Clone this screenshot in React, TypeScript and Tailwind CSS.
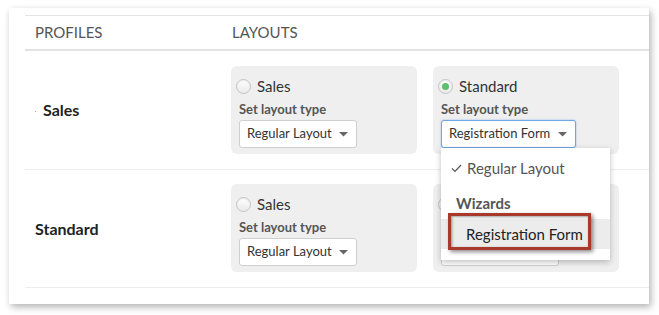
import React from 'react';

const Caret = () => (
  <svg width="9" height="5" viewBox="0 0 9 5" className="ml-auto shrink-0">
    <path d="M0 0 L9 0 L4.5 4.5 Z" fill="#666" />
  </svg>
);

const Radio = ({ checked }: { checked?: boolean }) => (
  <span className="w-[15px] h-[15px] rounded-full border border-[#c4c4c4] bg-gradient-to-b from-white to-[#e9e9e9] flex items-center justify-center shadow-[inset_0_1px_1px_rgba(0,0,0,0.08)]">
    {checked && <span className="w-[7px] h-[7px] rounded-full bg-[#5cbf6a]" />}
  </span>
);

interface PanelProps {
  name: string;
  checked?: boolean;
  value: string;
  width: string;
  focused?: boolean;
  menu?: boolean;
}

const Panel: React.FC<PanelProps> = ({ name, checked, value, width, focused, menu }) => (
  <div className="w-[186px] h-[88px] rounded-md bg-[#efefef] pl-[5px] pt-[11px]">
    <div className="flex items-center gap-[6px] text-[15px] text-[#333] leading-[18px]">
      <Radio checked={checked} />
      <span>{name}</span>
    </div>
    <div className="pl-[3px] mt-[6px] text-[13px] font-bold text-[#555] leading-[16px]">Set layout type</div>
    <div className="relative ml-[3px] mt-[3px]">
      <div
        className={`${width} h-[28px] flex items-center pl-[7px] pr-[8px] text-[13px] text-[#333] bg-white rounded-[3px] border whitespace-nowrap ${
          focused ? 'border-[#6ea6e8] shadow-[0_0_2px_rgba(80,140,230,0.6)]' : 'border-[#cfcfcf]'
        }`}
      >
        <span>{value}</span>
        <Caret />
      </div>
      {menu && (
        <div className="absolute left-0 top-[28px] z-10 w-[169px] h-[112px] bg-white shadow-[0_2px_6px_rgba(0,0,0,0.25)] whitespace-nowrap">
          <div className="flex items-center h-[40px] pl-[10px] text-[15px] text-[#555]">
            <svg width="11" height="9" viewBox="0 0 11 9" className="mr-[5px]">
              <path d="M1 4.5 L4 7.5 L10 1" fill="none" stroke="#555" strokeWidth="1.2" />
            </svg>
            Regular Layout
          </div>
          <div className="flex items-center h-[31px] pl-[15px] text-[15px] font-bold text-[#555]">Wizards</div>
          <div className="flex items-center h-[30px] pl-[25px] bg-[#ececec] text-[15px] text-[#222]">Registration Form</div>
          <div className="absolute left-[7px] top-[65px] w-[143px] h-[37px] border-[3px] border-[#a8392b] shadow-[2px_2px_4px_rgba(0,0,0,0.45),inset_1px_1px_3px_rgba(0,0,0,0.4)]" />
        </div>
      )}
    </div>
  </div>
);

export default function App() {
  return (
    <div className="min-h-screen bg-white font-['Lato',sans-serif] pt-2 pl-[9px]">
      <div className="w-[640px] h-[296px] bg-white shadow-[2px_3px_7px_rgba(0,0,0,0.3)] pt-[7px] pl-4">
        <div className="border-t border-[#e4e4e4]">
          {/* Header */}
          <div className="flex items-center h-[35px] border-b-2 border-[#e2e2e2] text-[15px] text-[#555]">
            <div className="w-[207px] pl-[10px]">PROFILES</div>
            <div>LAYOUTS</div>
          </div>

          {/* Row: Sales */}
          <div className="flex h-[119px] border-b border-[#ededed]">
            <div className="w-[206px] flex items-center pl-[10px] text-[16px] font-bold text-[#222]">
              <span className="w-[1px] h-[1px] bg-[#aaa] mt-[3px] mr-[7px]" />
              Sales
            </div>
            <div className="flex gap-4 pt-[15px]">
              <Panel name="Sales" value="Regular Layout" width="w-[118px]" />
              <Panel name="Standard" checked value="Registration Form" width="w-[135px]" focused menu />
            </div>
          </div>

          {/* Row: Standard */}
          <div className="flex h-[118px] border-b border-[#ededed]">
            <div className="w-[206px] flex items-center pl-[10px] text-[16px] font-bold text-[#222]">Standard</div>
            <div className="flex gap-4 pt-[14px]">
              <Panel name="Sales" value="Regular Layout" width="w-[118px]" />
              <Panel name="Standard" value="Regular Layout" width="w-[118px]" />
            </div>
          </div>
        </div>
      </div>
    </div>
  );
}
